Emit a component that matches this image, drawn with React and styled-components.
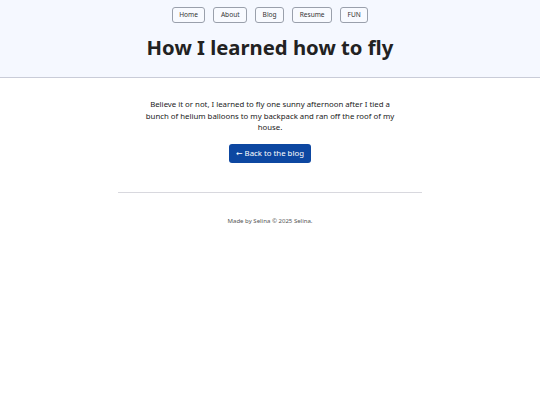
import React from 'react';
import styled, { createGlobalStyle } from 'styled-components';

const GlobalStyle = createGlobalStyle`
  body {
    margin: 0;
    background: #ffffff;
    font-family: "Noto Sans", "DejaVu Sans", sans-serif;
    color: #222222;
  }
`;

const Header = styled.header`
  background: #f5f8ff;
  border-bottom: 1px solid #c9ccd8;
  padding: 7px 0 17px;
  display: flex;
  flex-direction: column;
  align-items: center;
`;

const Nav = styled.nav`
  display: flex;
  gap: 8px;
`;

const NavButton = styled.a`
  display: block;
  font-size: 6.6px;
  line-height: 14px;
  padding: 0 6.5px;
  border: 1px solid #9aa0ac;
  border-radius: 3px;
  background: #f8faff;
  color: #333;
  text-decoration: none;
`;

const Title = styled.h1`
  margin: 11px 0 0;
  font-size: 20.3px;
  line-height: 26px;
  font-weight: 700;
  color: #222;
`;

const Main = styled.main`
  width: 304px;
  margin: 0 auto;
  padding-top: 21px;
  display: flex;
  flex-direction: column;
  align-items: center;
`;

const Text = styled.p`
  margin: 0;
  width: 252px;
  font-size: 7.8px;
  line-height: 11.5px;
  text-align: center;
  color: #222;
`;

const BackButton = styled.a`
  margin-top: 10px;
  display: block;
  background: #0d47a1;
  color: #fff;
  font-size: 7.8px;
  line-height: 19px;
  padding: 0 7.5px;
  border-radius: 3px;
  text-decoration: none;
`;

const Rule = styled.hr`
  width: 304px;
  margin: 29px 0 0;
  border: none;
  border-top: 1px solid #d8d8de;
`;

const Footer = styled.footer`
  text-align: center;
  font-size: 6.05px;
  line-height: 8px;
  color: #555;
  padding-top: 24px;
`;

export default function App() {
  return (
    <>
      <GlobalStyle />
      <Header>
        <Nav>
          {['Home', 'About', 'Blog', 'Resume', 'FUN'].map((l) => (
            <NavButton key={l} href="#">{l}</NavButton>
          ))}
        </Nav>
        <Title>How I learned how to fly</Title>
      </Header>
      <Main>
        <Text>
          Believe it or not, I learned to fly one sunny afternoon after I tied a
          bunch of helium balloons to my backpack and ran off the roof of my house.
        </Text>
        <BackButton href="#">← Back to the blog</BackButton>
        <Rule />
      </Main>
      <Footer>Made by Selina © 2025 Selina.</Footer>
    </>
  );
}
